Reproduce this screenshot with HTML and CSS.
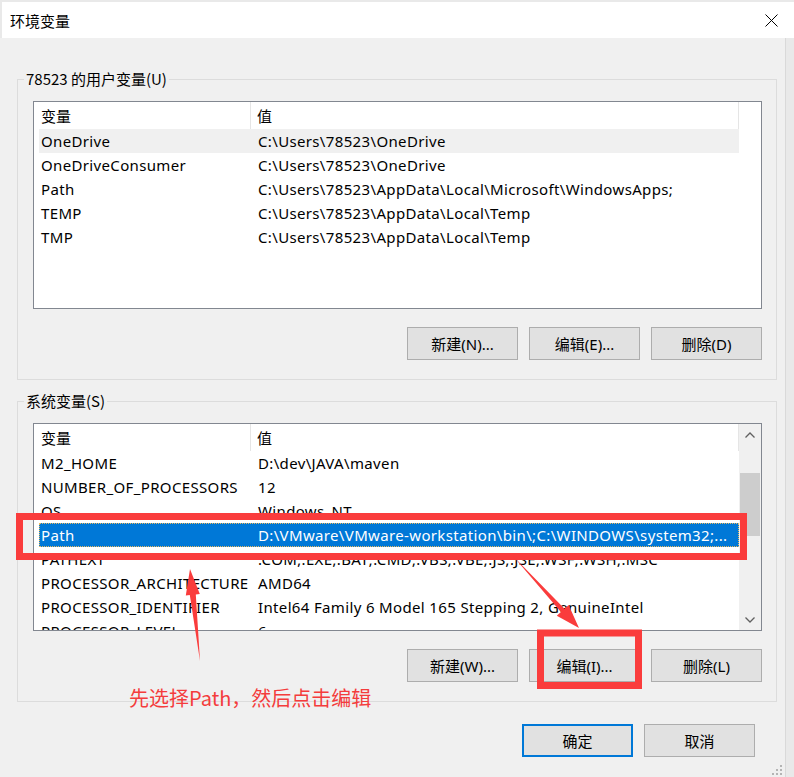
FILE: index.html
```html
<!DOCTYPE html>
<html>
<head>
    <title>环境变量</title>
    <link rel="stylesheet" href="styles.css">
</head>
<body>
    <div class="titlebar">
        <span class="title">环境变量</span>
        <svg class="close" width="13" height="13" viewBox="0 0 13 13">
            <path d="M0.5 0.5 L12.5 12.5 M12.5 0.5 L0.5 12.5" stroke="#000" stroke-width="1" fill="none"/>
        </svg>
    </div>

    <div class="dialog">
        <fieldset class="group">
            <legend>78523 的用户变量(U)</legend>
            <div class="listview">
                <div class="list-main">
                    <div class="list-head">
                        <div class="head-name">变量</div>
                        <div class="head-value">值</div>
                    </div>
                    <div class="row hot"><span>OneDrive</span><span>C:\Users\78523\OneDrive</span></div>
                    <div class="row"><span>OneDriveConsumer</span><span>C:\Users\78523\OneDrive</span></div>
                    <div class="row"><span>Path</span><span>C:\Users\78523\AppData\Local\Microsoft\WindowsApps;</span></div>
                    <div class="row"><span>TEMP</span><span>C:\Users\78523\AppData\Local\Temp</span></div>
                    <div class="row"><span>TMP</span><span>C:\Users\78523\AppData\Local\Temp</span></div>
                </div>
                <div class="list-side"></div>
            </div>
            <div class="btn-row">
                <button class="btn">新建(N)...</button>
                <button class="btn">编辑(E)...</button>
                <button class="btn">删除(D)</button>
            </div>
        </fieldset>

        <fieldset class="group system">
            <legend>系统变量(S)</legend>
            <div class="listview">
                <div class="list-main">
                    <div class="list-head">
                        <div class="head-name">变量</div>
                        <div class="head-value">值</div>
                    </div>
                    <div class="row"><span>M2_HOME</span><span>D:\dev\JAVA\maven</span></div>
                    <div class="row"><span>NUMBER_OF_PROCESSORS</span><span>12</span></div>
                    <div class="row"><span>OS</span><span>Windows_NT</span></div>
                    <div class="row selected"><span>Path</span><span>D:\VMware\VMware-workstation\bin\;C:\WINDOWS\system32;...</span></div>
                    <div class="row"><span>PATHEXT</span><span>.COM;.EXE;.BAT;.CMD;.VBS;.VBE;.JS;.JSE;.WSF;.WSH;.MSC</span></div>
                    <div class="row"><span>PROCESSOR_ARCHITECTURE</span><span>AMD64</span></div>
                    <div class="row"><span>PROCESSOR_IDENTIFIER</span><span>Intel64 Family 6 Model 165 Stepping 2, GenuineIntel</span></div>
                    <div class="row"><span>PROCESSOR_LEVEL</span><span>6</span></div>
                </div>
                <div class="list-side scrollbar">
                    <div class="arrow">
                        <svg width="10" height="6" viewBox="0 0 10 6"><path d="M0.5 5.5 L5 1 L9.5 5.5" stroke="#606060" stroke-width="1.3" fill="none"/></svg>
                    </div>
                    <div class="track"><div class="thumb"></div></div>
                    <div class="arrow">
                        <svg width="10" height="6" viewBox="0 0 10 6"><path d="M0.5 0.5 L5 5 L9.5 0.5" stroke="#606060" stroke-width="1.3" fill="none"/></svg>
                    </div>
                </div>
            </div>
            <div class="btn-row">
                <button class="btn">新建(W)...</button>
                <button class="btn">编辑(I)...</button>
                <button class="btn">删除(L)</button>
            </div>
        </fieldset>

        <div class="dialog-buttons">
            <button class="btn default">确定</button>
            <button class="btn">取消</button>
        </div>

        <svg class="grip" width="12" height="12" viewBox="0 0 12 12">
            <rect x="9" y="1" width="2" height="2" fill="#b4b4b4"/>
            <rect x="5" y="5" width="2" height="2" fill="#b4b4b4"/>
            <rect x="9" y="5" width="2" height="2" fill="#b4b4b4"/>
            <rect x="1" y="9" width="2" height="2" fill="#b4b4b4"/>
            <rect x="5" y="9" width="2" height="2" fill="#b4b4b4"/>
            <rect x="9" y="9" width="2" height="2" fill="#b4b4b4"/>
        </svg>
    </div>

    <!-- annotation layer drawn over the dialog -->
    <svg class="marks" width="794" height="777" viewBox="0 0 794 777">
        <rect x="19.5" y="516.5" width="724" height="40" fill="none" stroke="#fa3c3c" stroke-width="7"/>
        <rect x="540.5" y="633" width="98" height="52.5" fill="none" stroke="#fa3c3c" stroke-width="7"/>
        <polygon points="190,569 199.8,594 195.8,594.5 200,661 189.8,595.1 185.8,595.6" fill="#fa3c3c"/>
        <polygon points="579,628 568.6,605 564.5,608.7 513,556 560.9,612.1 556.8,615.8" fill="#fa3c3c"/>
    </svg>
    <div class="note">先选择Path，然后点击编辑</div>
</body>
</html>
```

FILE: styles.css
```css
body {
    margin: 0;
    width: 794px;
    height: 777px;
    overflow: hidden;
    position: relative;
    background-color: #e9e9e9;
    font-family: 'Noto Sans', 'Noto Sans CJK SC', sans-serif;
    font-size: 15px;
    color: #000;
}

.titlebar {
    margin: 2px 0 0 2px;
    height: 36px;
    background-color: #fff;
    display: flex;
    align-items: center;
    justify-content: space-between;
    padding: 0 16px 0 8px;
}

.title {
    font-family: 'Noto Sans CJK SC', sans-serif;
    font-size: 15px;
}

.close {
    display: block;
}

.dialog {
    position: relative;
    width: 786px;
    height: 739px;
    background-color: #f0f0f0;
    border-right: 1px solid #d9d9d9;
    padding-left: 17px;
    box-sizing: border-box;
    overflow: hidden;
}

.group {
    margin: 31px 0 0 0;
    padding: 0 0 19px 0;
    width: 760px;
    box-sizing: border-box;
    border: 1px solid #dcdcdc;
    min-width: 0;
}

.group.system {
    margin-top: 11px;
}

.group legend {
    margin-left: 6px;
    padding: 0 2px;
    line-height: 20px;
    font-family: 'Noto Sans CJK SC', sans-serif;
}

.listview {
    margin: 12px 0 0 15px;
    width: 729px;
    height: 208px;
    box-sizing: border-box;
    border: 1px solid #828790;
    background-color: #fff;
    display: flex;
    overflow: hidden;
}

.list-main {
    width: 705px;
    overflow: hidden;
}

.list-side {
    flex: 1;
}

.list-head {
    display: flex;
    height: 27px;
    align-items: stretch;
    font-family: 'Noto Sans CJK SC', sans-serif;
}

.head-name {
    width: 217px;
    padding-left: 7px;
    box-sizing: border-box;
    border-right: 1px solid #e5e5e5;
    line-height: 27px;
}

.head-value {
    flex: 1;
    padding-left: 6px;
    border-right: 1px solid #e5e5e5;
    line-height: 27px;
}

.row {
    margin-left: 5px;
    width: 700px;
    height: 24px;
    display: grid;
    grid-template-columns: 217px 1fr;
    align-items: center;
    white-space: nowrap;
    box-sizing: border-box;
    letter-spacing: 0.35px;
}

.row span {
    padding-left: 2px;
    overflow: hidden;
}

.row.hot {
    background-color: #f0f0f0;
}

.row.selected {
    background-color: #0078d7;
    color: #fff;
    outline: 1px dotted #e8b860;
    outline-offset: -1px;
}

.scrollbar {
    background-color: #f0f0f0;
    display: flex;
    flex-direction: column;
    padding: 0 1px;
}

.arrow {
    height: 21px;
    display: flex;
    align-items: center;
    justify-content: center;
}

.arrow svg {
    display: block;
}

.track {
    flex: 1;
}

.thumb {
    margin-top: 28px;
    height: 63px;
    background-color: #cdcdcd;
}

.btn-row {
    margin: 18px 0 0 15px;
    width: 729px;
    display: flex;
    justify-content: flex-end;
    gap: 11px;
}

.btn {
    width: 111px;
    height: 33px;
    box-sizing: border-box;
    background-color: #e1e1e1;
    border: 1px solid #adadad;
    font-family: 'Noto Sans', 'Noto Sans CJK SC', sans-serif;
    font-size: 15px;
    color: #000;
    padding: 0;
    display: flex;
    align-items: center;
    justify-content: center;
}

.btn.default {
    border: 2px solid #0078d7;
}

.dialog-buttons {
    margin-top: 22px;
    width: 738px;
    display: flex;
    justify-content: flex-end;
    gap: 11px;
}

.grip {
    position: absolute;
    right: 2px;
    bottom: 1px;
}

.marks {
    position: absolute;
    left: 0;
    top: 0;
    pointer-events: none;
}

.note {
    position: absolute;
    left: 129px;
    top: 684px;
    font-family: 'Noto Sans CJK SC', sans-serif;
    font-size: 20px;
    line-height: 28px;
    color: #f43c3c;
}
```
